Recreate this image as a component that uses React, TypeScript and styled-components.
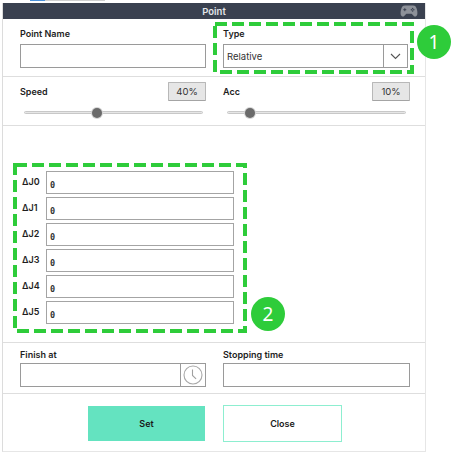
import styled, { createGlobalStyle } from "styled-components";

const GlobalStyle = createGlobalStyle`
  html, body {
    margin: 0;
    padding: 0;
    background: #ffffff;
  }
  body {
    font-family: "Inter", "Noto Sans", sans-serif;
    color: #1c1c1c;
  }
`;

const Page = styled.div`
  position: relative;
  width: 453px;
  height: 453px;
  overflow: hidden;
  background: #ffffff;
`;

const TopStrip = styled.div`
  display: flex;
  height: 3px;
  padding-left: 30px;
`;

const StripTab = styled.div<{ $color: string; $width: number }>`
  width: ${(props) => props.$width}px;
  height: 1px;
  background: ${(props) => props.$color};
`;

const Panel = styled.div`
  width: 424px;
  height: 449px;
  margin-left: 2px;
  box-sizing: border-box;
  border-left: 1px solid #dcdcdc;
  border-right: 1px solid #e6e6e6;
  border-bottom: 1px solid #e6e6e6;
  display: flex;
  flex-direction: column;
`;

const TitleBar = styled.div`
  position: relative;
  height: 16px;
  flex: none;
  background: #3a4150;
  color: #e4e6ea;
  font-size: 9.5px;
  font-weight: 600;
  display: flex;
  align-items: center;
  justify-content: center;
`;

const PadIcon = styled.svg`
  position: absolute;
  right: 7px;
  top: 1px;
  width: 18px;
  height: 14px;
`;

const Section = styled.div<{ $height: number }>`
  height: ${(props) => props.$height}px;
  flex: none;
  box-sizing: border-box;
  border-bottom: 1px solid #dedede;
  padding-left: 17px;
`;

const TwoCols = styled(Section)`
  display: grid;
  grid-template-columns: 186px 187px;
  column-gap: 17px;
  align-content: start;
`;

const Field = styled.div<{ $top: number }>`
  padding-top: ${(props) => props.$top}px;
`;

const Label = styled.div`
  font-size: 9px;
  font-weight: 600;
  line-height: 11px;
  color: #1e1e1e;
`;

const InputBox = styled.div<{ $top: number; $inset?: number }>`
  margin-top: ${(props) => props.$top}px;
  margin-right: ${(props) => props.$inset ?? 0}px;
  height: 24px;
  box-sizing: border-box;
  border: 1px solid #9a9a9a;
  background: #ffffff;
  display: flex;
  align-items: stretch;
  font-size: 9.5px;
  color: #333333;
`;

const InputText = styled.div`
  flex: 1;
  padding-left: 3px;
  display: flex;
  align-items: center;
`;

const Addon = styled.div<{ $width: number }>`
  width: ${(props) => props.$width}px;
  flex: none;
  border-left: 1px solid #9a9a9a;
  display: flex;
  align-items: center;
  justify-content: center;
`;

const SliderField = styled.div`
  padding-top: 4px;
`;

const SliderHead = styled.div`
  height: 20px;
  display: flex;
  align-items: center;
  justify-content: space-between;
`;

const Chip = styled.div`
  width: 38px;
  height: 19px;
  box-sizing: border-box;
  border: 1px solid #b8b8b8;
  border-bottom-color: #a4a4a4;
  border-radius: 1px;
  background: #e6e6e6;
  font-size: 9.5px;
  color: #333333;
  display: flex;
  align-items: center;
  justify-content: center;
`;

const Track = styled.div`
  position: relative;
  height: 3px;
  width: 179px;
  margin: 10px 0 0 4px;
  border: 1px solid #c8c8c8;
  border-radius: 2px;
  background: #e6e6e6;
  box-sizing: border-box;
`;

const Thumb = styled.div<{ $left: number }>`
  position: absolute;
  left: ${(props) => props.$left}px;
  top: -4px;
  width: 10px;
  height: 10px;
  border-radius: 50%;
  background: #6a6a6a;
  box-shadow: 0 0 0 1px #d4d4d4;
`;

const JointSection = styled(Section)`
  padding-top: 45px;
  padding-left: 0;
  display: flex;
  flex-direction: column;
  gap: 4px;
`;

const JointRow = styled.div`
  height: 22px;
  display: grid;
  grid-template-columns: 43px 188px;
  align-items: center;
`;

const JointLabel = styled(Label)`
  padding-left: 19px;
  margin-top: -2px;
  white-space: nowrap;
`;

const JointInput = styled.div`
  height: 23px;
  box-sizing: border-box;
  border: 1px solid #a4a4a4;
  background: #ffffff;
  font-family: "DejaVu Sans Mono", monospace;
  font-size: 8.5px;
  font-weight: 700;
  color: #333333;
  padding: 4px 0 0 3px;
  display: flex;
  align-items: center;
`;

const ButtonRow = styled.div`
  flex: 1;
  display: grid;
  grid-template-columns: 117px 119px;
  column-gap: 18px;
  padding: 11px 0 0 85px;
  align-content: start;
`;

const ActionButton = styled.button<{ $primary?: boolean }>`
  height: ${(props) => (props.$primary ? 35 : 37)}px;
  margin-top: ${(props) => (props.$primary ? 1 : 0)}px;
  box-sizing: border-box;
  border: ${(props) => (props.$primary ? "none" : "1px solid #8deed0")};
  background: ${(props) => (props.$primary ? "#64e3c0" : "#ffffff")};
  font-family: inherit;
  font-size: 9px;
  font-weight: 600;
  color: #1a1a1a;
  padding: 0;
`;

const DashedFrame = styled.svg<{ $left: number; $top: number }>`
  position: absolute;
  left: ${(props) => props.$left}px;
  top: ${(props) => props.$top}px;
  overflow: visible;
`;

const Badge = styled.div<{ $left: number; $top: number }>`
  position: absolute;
  left: ${(props) => props.$left}px;
  top: ${(props) => props.$top}px;
  width: 34px;
  height: 34px;
  border-radius: 50%;
  background: #2ecc3a;
  color: #ffffff;
  font-family: "Noto Sans", sans-serif;
  font-size: 19px;
  display: flex;
  align-items: center;
  justify-content: center;
`;

const joints = ["ΔJ0", "ΔJ1", "ΔJ2", "ΔJ3", "ΔJ4", "ΔJ5"];

const Frame = ({ left, top, width, height }: { left: number; top: number; width: number; height: number }) => (
  <DashedFrame $left={left} $top={top} width={width} height={height}>
    <rect
      x="2"
      y="2"
      width={width - 4}
      height={height - 4}
      fill="none"
      stroke="#2ecc3a"
      strokeWidth="4"
      strokeDasharray="12 5"
    />
  </DashedFrame>
);

const App = () => {
  return (
    <Page>
      <GlobalStyle />
      <TopStrip>
        <StripTab $color="#4a90d9" $width={15} />
        <StripTab $color="#d0d0d0" $width={60} />
      </TopStrip>
      <Panel>
        <TitleBar>
          Point
          <PadIcon viewBox="0 0 18 14">
            <path
              d="M5 1.5h8c2.3 0 3.4 1.6 4 4.2.5 2.4.8 5-.6 6.4-1.2 1.1-2.6.2-3.6-1.1-.6-.8-1-1.3-2-1.3H7.2c-1 0-1.4.5-2 1.3-1 1.3-2.4 2.2-3.6 1.1C.2 10.7.5 8.1 1 5.7 1.6 3.1 2.7 1.5 5 1.5z"
              fill="#8d9199"
            />
            <path d="M4.8 4.2v3M3.3 5.7h3" stroke="#3a4150" strokeWidth="1" />
            <circle cx="12.6" cy="4.6" r=".8" fill="#3a4150" />
            <circle cx="12.6" cy="7" r=".8" fill="#3a4150" />
            <circle cx="11.4" cy="5.8" r=".8" fill="#3a4150" />
            <circle cx="13.8" cy="5.8" r=".8" fill="#3a4150" />
          </PadIcon>
        </TitleBar>

        <TwoCols $height={58}>
          <Field $top={9}>
            <Label>Point Name</Label>
            <InputBox $top={5} />
          </Field>
          <Field $top={9}>
            <Label>Type</Label>
            <InputBox $top={5} $inset={2}>
              <InputText>Relative</InputText>
              <Addon $width={23}>
                <svg width="11" height="7" viewBox="0 0 11 7">
                  <path d="M1 1l4.5 4.5L10 1" fill="none" stroke="#555555" strokeWidth="1.1" />
                </svg>
              </Addon>
            </InputBox>
          </Field>
        </TwoCols>

        <TwoCols $height={49}>
          <SliderField>
            <SliderHead>
              <Label>Speed</Label>
              <Chip>40%</Chip>
            </SliderHead>
            <Track>
              <Thumb $left={67} />
            </Track>
          </SliderField>
          <SliderField>
            <SliderHead>
              <Label>Acc</Label>
              <Chip>10%</Chip>
            </SliderHead>
            <Track>
              <Thumb $left={17} />
            </Track>
          </SliderField>
        </TwoCols>

        <JointSection $height={217}>
          {joints.map((joint) => (
            <JointRow key={joint}>
              <JointLabel>{joint}</JointLabel>
              <JointInput>0</JointInput>
            </JointRow>
          ))}
        </JointSection>

        <TwoCols $height={51}>
          <Field $top={6}>
            <Label>Finish at</Label>
            <InputBox $top={3}>
              <InputText />
              <Addon $width={24}>
                <svg width="20" height="20" viewBox="0 0 20 20">
                  <circle cx="10" cy="10" r="9" fill="none" stroke="#a8a8a8" strokeWidth="1.1" />
                  <path d="M9.5 4.5v6l3.6 3.4" fill="none" stroke="#a0a0a0" strokeWidth="1.1" />
                </svg>
              </Addon>
            </InputBox>
          </Field>
          <Field $top={6}>
            <Label>Stopping time</Label>
            <InputBox $top={3} />
          </Field>
        </TwoCols>

        <ButtonRow>
          <ActionButton $primary>Set</ActionButton>
          <ActionButton>Close</ActionButton>
        </ButtonRow>
      </Panel>

      <Frame left={213} top={22} width={201} height={52} />
      <Frame left={13} top={163} width={234} height={170} />
      <Badge $left={417} $top={25}>1</Badge>
      <Badge $left={251} $top={297}>2</Badge>
    </Page>
  );
};

export default App;
